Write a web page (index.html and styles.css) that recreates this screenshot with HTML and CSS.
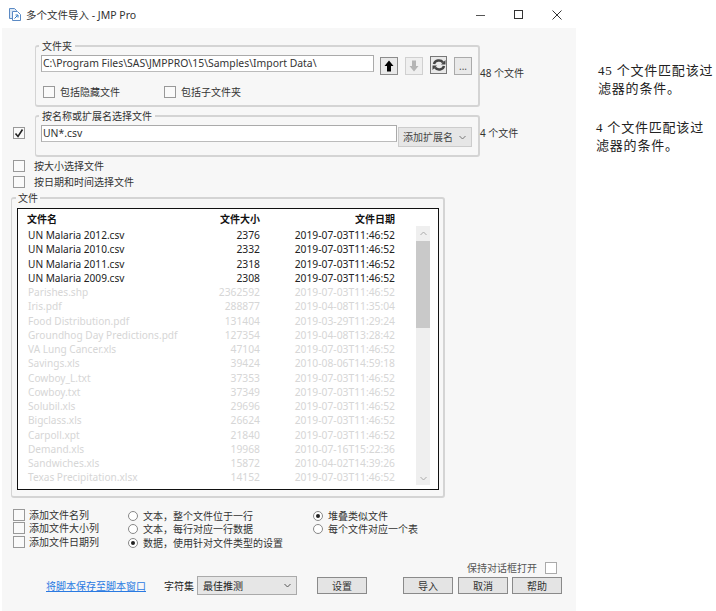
FILE: index.html
```html
<!DOCTYPE html>
<html lang="zh">
<head>
<meta charset="utf-8">
<title>多个文件导入 - JMP Pro</title>
<link rel="stylesheet" href="styles.css">
</head>
<body>
<div class="page">
  <div class="window">
    <header class="titlebar">
      <svg class="appicon" width="12" height="13" viewBox="0 0 12 13"><path d="M.5.5h5l2 2v8h-7z" fill="#dce8f6" stroke="#5b8ac4"/><path d="M3.500 3.500h5l3 3v6h-8z" fill="#fff" stroke="#5b8ac4"/><path d="M5.500 10.500l3-3M6.500 7h2.500v2.500" fill="none" stroke="#2f78c4"/></svg>
      <span class="title">多个文件导入 - JMP Pro</span>
      <span class="winbtns">
        <svg width="10" height="10" viewBox="0 0 10 10"><path d="M0 5.500h9" stroke="#555"/></svg>
        <svg width="10" height="10" viewBox="0 0 10 10"><rect x=".5" y=".5" width="8" height="8" fill="none" stroke="#333"/></svg>
        <svg width="10" height="10" viewBox="0 0 10 10"><path d="M.5.5l9 9M9.500.5l-9 9" stroke="#333"/></svg>
      </span>
    </header>
    <main class="panel">
      <div class="row-folder">
        <fieldset class="group group-folder">
          <legend>文件夹</legend>
          <div class="pathrow">
            <div class="input input-path">C:\Program Files\SAS\JMPPRO\15\Samples\Import Data\</div>
            <button class="iconbtn"><svg width="10" height="12" viewBox="0 0 10 12"><path d="M5 .5L9.500 6H7v5.500H3V6H.5z" fill="#000"/></svg></button>
            <button class="iconbtn off"><svg width="10" height="12" viewBox="0 0 10 12"><path d="M5 11.500L9.500 6H7V.5H3V6H.5z" fill="#b4b4b4"/></svg></button>
            <button class="iconbtn refresh"><svg width="14" height="14" viewBox="0 0 14 14"><path d="M2 6a5 4.500 0 0 1 9-1.500M12 8a5 4.500 0 0 1-9 1.500" fill="none" stroke="#444" stroke-width="2.500"/><path d="M9 6.500h4.500V2zM5 7.500H.5V12z" fill="#444"/></svg></button>
            <button class="iconbtn dots">...</button>
          </div>
          <div class="includes">
            <label class="check include-a"><span class="box"></span>包括隐藏文件</label>
            <label class="check"><span class="box"></span>包括子文件夹</label>
          </div>
        </fieldset>
        <span class="count count-a">48 个文件</span>
      </div>
      <div class="row-name">
        <span class="box box-outer checked"><svg width="10" height="9" viewBox="0 0 10 9"><path d="M1.500 4.500l2.500 3 4.500-7" fill="none" stroke="#222" stroke-width="1.600"/></svg></span>
        <fieldset class="group group-name">
          <legend>按名称或扩展名选择文件</legend>
          <div class="namerow">
            <div class="input input-name">UN*.csv</div>
            <div class="dropdown">添加扩展名<svg width="7" height="5" viewBox="0 0 7 5"><path d="M.5 1l3 3 3-3" fill="none" stroke="#777"/></svg></div>
          </div>
        </fieldset>
        <span class="count count-b">4 个文件</span>
      </div>
      <label class="check sel sel-a"><span class="box"></span>按大小选择文件</label>
      <label class="check sel sel-b"><span class="box"></span>按日期和时间选择文件</label>
      <fieldset class="group group-files">
        <legend>文件</legend>
        <div class="listbox">
          <div class="listcols">
            <div class="filetable">
              <div class="frow head"><span class="fname">文件名</span><span class="fsize">文件大小</span><span class="fdate">文件日期</span></div>
              <div class="frow"><span class="fname">UN Malaria 2012.csv</span><span class="fsize">2376</span><span class="fdate">2019-07-03T11:46:52</span></div>
              <div class="frow"><span class="fname">UN Malaria 2010.csv</span><span class="fsize">2332</span><span class="fdate">2019-07-03T11:46:52</span></div>
              <div class="frow"><span class="fname">UN Malaria 2011.csv</span><span class="fsize">2318</span><span class="fdate">2019-07-03T11:46:52</span></div>
              <div class="frow"><span class="fname">UN Malaria 2009.csv</span><span class="fsize">2308</span><span class="fdate">2019-07-03T11:46:52</span></div>
              <div class="frow dim"><span class="fname">Parishes.shp</span><span class="fsize">2362592</span><span class="fdate">2019-07-03T11:46:52</span></div>
              <div class="frow dim"><span class="fname">Iris.pdf</span><span class="fsize">288877</span><span class="fdate">2019-04-08T11:35:04</span></div>
              <div class="frow dim"><span class="fname">Food Distribution.pdf</span><span class="fsize">131404</span><span class="fdate">2019-03-29T11:29:24</span></div>
              <div class="frow dim"><span class="fname">Groundhog Day Predictions.pdf</span><span class="fsize">127354</span><span class="fdate">2019-04-08T13:28:42</span></div>
              <div class="frow dim"><span class="fname">VA Lung Cancer.xls</span><span class="fsize">47104</span><span class="fdate">2019-07-03T11:46:52</span></div>
              <div class="frow dim"><span class="fname">Savings.xls</span><span class="fsize">39424</span><span class="fdate">2010-08-06T14:59:18</span></div>
              <div class="frow dim"><span class="fname">Cowboy_L.txt</span><span class="fsize">37353</span><span class="fdate">2019-07-03T11:46:52</span></div>
              <div class="frow dim"><span class="fname">Cowboy.txt</span><span class="fsize">37349</span><span class="fdate">2019-07-03T11:46:52</span></div>
              <div class="frow dim"><span class="fname">Solubil.xls</span><span class="fsize">29696</span><span class="fdate">2019-07-03T11:46:52</span></div>
              <div class="frow dim"><span class="fname">Bigclass.xls</span><span class="fsize">26624</span><span class="fdate">2019-07-03T11:46:52</span></div>
              <div class="frow dim"><span class="fname">Carpoll.xpt</span><span class="fsize">21840</span><span class="fdate">2019-07-03T11:46:52</span></div>
              <div class="frow dim"><span class="fname">Demand.xls</span><span class="fsize">19968</span><span class="fdate">2010-07-16T15:22:36</span></div>
              <div class="frow dim"><span class="fname">Sandwiches.xls</span><span class="fsize">15872</span><span class="fdate">2010-04-02T14:39:26</span></div>
              <div class="frow dim"><span class="fname">Texas Precipitation.xlsx</span><span class="fsize">14152</span><span class="fdate">2019-07-03T11:46:52</span></div>
            </div>
            <div class="scrollbar">
              <svg class="arrow" width="7" height="5" viewBox="0 0 7 5"><path d="M.5 4l3-3 3 3" fill="none" stroke="#aaa"/></svg>
              <div class="thumb"></div>
              <svg class="arrow arrow-down" width="7" height="5" viewBox="0 0 7 5"><path d="M.5 1l3 3 3-3" fill="none" stroke="#aaa"/></svg>
            </div>
          </div>
        </div>
      </fieldset>
      <div class="options">
        <div class="optcol col-add">
          <label class="check"><span class="box"></span>添加文件名列</label>
          <label class="check"><span class="box"></span>添加文件大小列</label>
          <label class="check"><span class="box"></span>添加文件日期列</label>
        </div>
        <div class="optcol col-mode">
          <label class="check"><span class="radio"></span>文本，整个文件位于一行</label>
          <label class="check"><span class="radio"></span>文本，每行对应一行数据</label>
          <label class="check"><span class="radio on"></span>数据，使用针对文件类型的设置</label>
        </div>
        <div class="optcol col-stack">
          <label class="check"><span class="radio on"></span>堆叠类似文件</label>
          <label class="check"><span class="radio"></span>每个文件对应一个表</label>
        </div>
      </div>
      <div class="keepopen"><span>保持对话框打开</span><span class="box"></span></div>
      <footer class="actions">
        <a class="link" href="#">将脚本保存至脚本窗口</a>
        <span class="charset">字符集</span>
        <div class="select">最佳推测<svg width="7" height="5" viewBox="0 0 7 5"><path d="M.5 1l3 3 3-3" fill="none" stroke="#555"/></svg></div>
        <button class="btn btn-settings">设置</button>
        <button class="btn btn-import">导入</button>
        <button class="btn">取消</button>
        <button class="btn btn-help">帮助</button>
      </footer>
    </main>
  </div>
  <aside class="notes">
    <p class="note note-a">45 个文件匹配该过滤器的条件。</p>
    <p class="note note-b">4 个文件匹配该过滤器的条件。</p>
  </aside>
</div>
</body>
</html>
```
FILE: styles.css
```css
* { box-sizing: border-box; }
html, body { margin: 0; padding: 0; background: #fff; }
body {
  width: 716px;
  height: 611px;
  overflow: hidden;
  font-family: "Noto Sans", "Noto Sans CJK SC", sans-serif;
  font-size: 10px;
  line-height: 14px;
  color: #333;
}
.page { display: flex; height: 611px; }
.window { width: 576px; flex: none; display: flex; flex-direction: column; }
.titlebar { height: 28px; display: flex; align-items: center; padding: 1px 14px 0 9px; flex: none; }
.appicon { margin-right: 5px; }
.title { font-size: 10.5px; color: #333; }
.winbtns { margin-left: auto; display: flex; gap: 28px; }
.panel { flex: 1; margin-left: 2px; background: #f7f7f7; padding: 13px 0 0 0; position: relative; }

.group { border: 1px solid #d4d4d4; border-width: 2px 2px 2px 1px; border-radius: 3px; margin: 0; min-width: 0; }
.group legend { padding: 0 3px; margin-left: -2px; font-size: 10px; line-height: 10px; color: #333; }

.row-folder { display: flex; align-items: flex-start; padding-left: 33px; }
.group-folder { width: 445px; height: 66px; padding: 4px 6px 0 5px; flex: none; }
.pathrow { display: flex; align-items: flex-start; }
.input { background: #fff; border: 1px solid #aaa; border-bottom-color: #bbb; height: 17px; padding: 0 1px; line-height: 14px; font-size: 10.4px; color: #333; white-space: nowrap; }
.input-path { width: 333px; }
.iconbtn { width: 18px; height: 18px; margin: 2px 0 0 6px; padding: 0; border: 1px solid #8c8c8c; background: #e9e9e9; display: flex; align-items: center; justify-content: center; flex: none; }
.iconbtn.off { border-color: #d0d0d0; background: #efefef; margin-left: 7px; }
.iconbtn.refresh { margin-left: 7px; margin-top: 1px; border-color: #777; width: 17px; }
.iconbtn.dots { margin-left: 7px; border-color: #aaa; font: 10px/10px "Noto Sans", sans-serif; color: #555; }
.includes { display: flex; margin: 10px 0 0 2px; }
.check { display: flex; align-items: center; gap: 5px; white-space: nowrap; }
.include-a { width: 121px; }
.box { width: 12px; height: 12px; border: 1px solid #999; background: #fafafa; display: flex; align-items: center; justify-content: center; flex: none; }
.count { white-space: nowrap; }
.count-a { margin-top: 25px; }

.row-name { display: flex; align-items: flex-start; margin-top: 4px; padding-left: 11px; }
.box-outer { margin: 16px 10px 0 0; }
.group-name { width: 445px; height: 46px; padding: 4px 6px 0 5px; flex: none; }
.namerow { display: flex; align-items: flex-start; }
.input-name { width: 356px; }
.dropdown { width: 74px; height: 20px; margin: 2px 0 0 1px; background: #e6e6e6; border: 1px solid #ccc; display: flex; align-items: center; justify-content: space-between; padding: 0 5px 0 4px; font-size: 10px; color: #444; }
.count-b { margin-top: 15px; }

.sel { margin-left: 11px; gap: 9px; height: 16px; }
.sel-a { margin-top: 1px; }

.group-files { width: 434px; height: 305px; margin: 3px 0 0 9px; padding: 0 4px 0 5px; }
.group-files legend { margin-left: -1px; padding: 0 2px; }
.listbox { height: 282px; background: #fff; border: 1px solid #111; border-width: 1px 1.5px 1.5px 1px; padding: 3px 9px 0 9px; margin-top: 5px; }
.listcols { display: flex; }
.filetable { width: 368px; flex: none; }
.frow { display: flex; height: 14.25px; line-height: 14px; color: #222; font-size: 10.3px; white-space: nowrap; }
.frow .fname { padding-left: 1px; font-size: 10.1px; }
.frow.head { height: 16px; font-size: 10px; font-weight: 700; color: #111; line-height: 15px; }
.frow.head .fname { padding-left: 0; font-size: 10px; }
.frow.dim { color: #d6d6d6; }
.fname { width: 173px; }
.fsize { width: 60px; text-align: right; }
.fdate { width: 135px; text-align: right; }
.scrollbar { width: 14px; height: 259px; margin: 14px 0 0 21px; background: #efefef; position: relative; display: flex; flex-direction: column; align-items: center; flex: none; }
.arrow { margin-top: 5px; flex: none; }
.thumb { width: 14px; height: 87px; margin-top: 5px; background: #c9c9c9; flex: none; }
.arrow-down { margin-top: auto; margin-bottom: 4px; }

.options { display: flex; margin: 10px 0 0 11px; }
.optcol { display: flex; flex-direction: column; }
.optcol .check { height: 13.5px; }
.col-add { width: 115px; }
.col-add .check { gap: 4px; }
.col-mode { width: 185px; padding-top: 1px; }
.col-stack { padding-top: 1px; }
.radio { width: 10px; height: 10px; border: 1px solid #888; border-radius: 50%; background: #fff; flex: none; position: relative; }
.radio.on::after { content: ""; position: absolute; left: 2px; top: 2px; width: 4px; height: 4px; border-radius: 50%; background: #222; }

.keepopen { display: flex; align-items: center; justify-content: flex-end; gap: 8px; padding-right: 19px; margin-top: 11px; height: 14px; color: #555; }
.keepopen .box { border-color: #aaa; background: #fff; }

.actions { display: flex; align-items: center; margin-top: 2px; padding-left: 44px; height: 18px; }
.link { width: 118px; color: #2a7ae2; text-decoration: underline; white-space: nowrap; }
.charset { width: 33px; color: #222; }
.select { width: 100px; height: 19px; background: #e6e6e6; border: 1px solid #aaa; display: flex; align-items: center; justify-content: space-between; padding: 0 5px; color: #222; }
.btn { width: 50px; height: 17px; padding: 0; border: 1px solid #8a8a8a; background: #e4e4e4; font: 10px/14px "Noto Sans", "Noto Sans CJK SC", sans-serif; color: #333; margin-left: 5px; }
.btn-settings { margin-left: 20px; }
.btn-import { margin-left: 36px; }
.btn-help { margin-left: 4px; }

.notes { flex: 1; min-width: 0; padding: 62px 0 0 22px; }
.note { margin: 0; width: 118px; font-family: "Liberation Serif", "Noto Sans CJK SC", serif; font-size: 13px; line-height: 18px; letter-spacing: .8px; color: #222; }
.note-b { margin: 21px 0 0 -2px; }
```
